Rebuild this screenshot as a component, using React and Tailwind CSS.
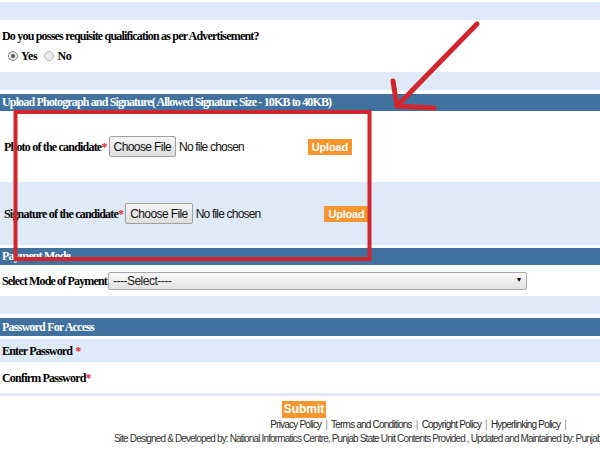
export default function App() {
  return (
    <div className="relative w-[600px] h-[450px] overflow-hidden bg-white font-['Liberation_Serif',serif] text-[12px] text-black">
      <div className="pt-[2px]">
        <div className="h-[18px] bg-[#dfeaf8]" />
      </div>

      {/* qualification */}
      <div className="h-[52px] flex flex-col justify-center gap-[6px] px-[2px] font-bold tracking-[-0.8px]">
        <div className="leading-[14px]">Do you posses requisite qualification as per Advertisement?</div>
        <div className="flex items-center leading-[14px] pl-[6px]">
          <span className="w-[10px] h-[10px] rounded-full border border-[#8a8a8a] bg-[#e8e8e8] flex items-center justify-center">
            <span className="w-[4px] h-[4px] rounded-full bg-[#555]" />
          </span>
          <span className="ml-[3px] tracking-[-0.3px]">Yes</span>
          <span className="ml-[7px] w-[10px] h-[10px] rounded-full border border-[#b0b0b0] bg-[#ececec]" />
          <span className="ml-[3px] tracking-[-0.3px]">No</span>
        </div>
      </div>
      <div className="h-[18px] bg-[#dfeaf8]" />
      <div className="h-[4px]" />

      {/* upload section */}
      <div className="h-[17px] bg-[#41729f] text-white font-bold leading-[17px] px-[2px] tracking-[-0.85px] whitespace-nowrap">
        Upload Photograph and Signature( Allowed Signature Size - 10KB to 40KB)
      </div>
      <div className="h-[71px] flex items-center pl-[4px]">
        <span className="font-bold tracking-[-0.8px]">Photo of the candidate<span className="text-[#e0282e]">*</span></span>
        <FileBox />
        <UploadBtn className="ml-[64px]" />
      </div>
      <div className="h-[63px] flex items-center pl-[4px] bg-[#dfeaf8]">
        <span className="font-bold tracking-[-0.8px]">Signature of the candidate<span className="text-[#e0282e]">*</span></span>
        <FileBox />
        <UploadBtn className="ml-[64px]" />
      </div>
      <div className="h-[3px]" />

      {/* payment */}
      <div className="h-[17px] bg-[#41729f] text-white font-bold leading-[17px] px-[2px] tracking-[-0.8px]">Payment Mode</div>
      <div className="h-[31px] flex items-center px-[2px]">
        <span className="font-bold tracking-[-0.85px]">Select Mode of Payment</span>
        <div className="ml-[1px] w-[419px] h-[18px] border border-[#a9a9a9] rounded-[2px] bg-gradient-to-b from-[#fafafa] to-[#e2e2e2] flex items-center justify-between pl-[4px] pr-[4px] font-['Liberation_Sans',sans-serif] text-[12px] tracking-[-0.5px] text-[#222]">
          <span>----Select----</span>
          <span className="text-[7px] text-black">▼</span>
        </div>
      </div>
      <div className="h-[18px] bg-[#dfeaf8]" />
      <div className="h-[4px]" />

      {/* password */}
      <div className="h-[18px] bg-[#41729f] text-white font-bold leading-[18px] px-[2px] tracking-[-0.8px]">Password For Access</div>
      <div className="h-[3px]" />
      <div className="h-[23px] bg-[#dfeaf8] flex items-center px-[2px] font-bold tracking-[-0.8px]">
        Enter Password <span className="ml-[3px] text-[#e0282e]">*</span>
      </div>
      <div className="h-[31px] flex items-center px-[2px] font-bold tracking-[-0.8px]">
        Confirm Password<span className="text-[#e0282e]">*</span>
      </div>
      <div className="h-[3px] bg-[#dfeaf8]" />

      {/* footer */}
      <div className="flex flex-col items-center pt-[5px] font-['Liberation_Sans',sans-serif]">
        <div className="ml-[8px] w-[44px] h-[17px] bg-[#f7962f] text-white font-bold text-[12px] leading-[17px] text-center">Submit</div>
      </div>
      <div className="flex justify-end pr-[34px] mt-[1px] font-['Liberation_Sans',sans-serif] text-[10px] leading-[12px] tracking-[-0.8px] text-[#222] whitespace-nowrap">
        <span>Privacy Policy</span>
        <span className="mx-[4px] text-[#888]">|</span>
        <span>Terms and Conditions</span>
        <span className="mx-[4px] text-[#888]">|</span>
        <span>Copyright Policy</span>
        <span className="mx-[4px] text-[#888]">|</span>
        <span>Hyperlinking Policy</span>
        <span className="ml-[4px] text-[#888]">|</span>
      </div>
      <div className="mt-[2px] pl-[114px] font-['Liberation_Sans',sans-serif] text-[10px] leading-[12px] tracking-[-0.85px] text-[#333] whitespace-nowrap">
        Site Designed &amp; Developed by: National Informatics Centre, Punjab State Unit Contents Provided , Updated and Maintained by: Punjab <span className="text-[#e0b020]">Subordinate</span>
      </div>

      {/* red annotation */}
      <svg className="absolute left-0 top-0 pointer-events-none" width="600" height="450" viewBox="0 0 600 450">
        <rect x="15.5" y="112" width="354" height="147" fill="none" stroke="#d2262f" strokeWidth="4" />
        <g stroke="#d2262f" strokeWidth="5" strokeLinecap="round" fill="none">
          <line x1="477" y1="24" x2="397" y2="106" />
          <line x1="393" y1="81" x2="397" y2="106" />
          <line x1="397" y1="106" x2="434" y2="108" />
        </g>
      </svg>
    </div>
  );
}

function FileBox() {
  return (
    <div className="flex items-center font-['Liberation_Sans',sans-serif] text-[12px] text-[#111]">
      <span className="ml-[2px] h-[21px] px-[4px] flex items-center border border-[#a0a0a0] rounded-[2px] bg-gradient-to-b from-[#f6f6f6] to-[#dedede] tracking-[-0.6px]">Choose File</span>
      <span className="ml-[3px] tracking-[-0.8px]">No file chosen</span>
    </div>
  );
}

function UploadBtn({ className }) {
  return (
    <span className={`${className} w-[44px] h-[16px] bg-[#f7962f] text-white font-bold font-['Liberation_Sans',sans-serif] text-[11px] leading-[16px] text-center tracking-[-0.2px]`}>
      Upload
    </span>
  );
}
